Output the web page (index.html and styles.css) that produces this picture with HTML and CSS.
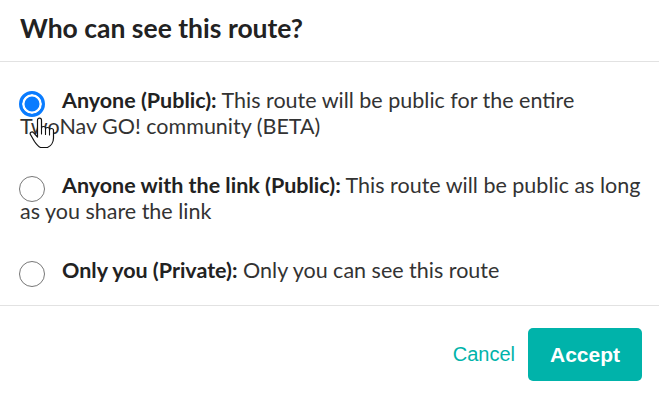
FILE: index.html
```html
<!DOCTYPE html>
<html>
<head>
<meta charset="utf-8">
<link rel="stylesheet" href="styles.css">
</head>
<body>
<div class="dialog">
  <header class="head">
    <h1 class="title">Who can see this route?</h1>
  </header>
  <div class="options">
    <label class="opt"><input class="radio" type="radio" name="vis" checked><b>Anyone (Public):</b> This route will be public for the entire TwoNav GO! community (BETA)</label>
    <label class="opt"><input class="radio" type="radio" name="vis"><b>Anyone with the link (Public):</b> This route will be public as long as you share the link</label>
    <label class="opt"><input class="radio" type="radio" name="vis"><b>Only you (Private):</b> Only you can see this route</label>
  </div>
  <footer class="foot">
    <button class="cancel" type="button">Cancel</button>
    <button class="accept" type="button">Accept</button>
  </footer>
  <svg class="cursor" width="26" height="32" viewBox="0 0 26 32">
    <path d="M8.5 17 V3.2 a2 2 0 0 1 4 0 V11.5 a2 2 0 0 1 4 0 v1 a2 2 0 0 1 4 0 v1 a2 2 0 0 1 4 0 V21 c0 4-2.5 8-6 9.5 h-7 c-2.5-1-4-3-6-6 L1.6 17.8 a1.8 1.8 0 0 1 2.9-2.2 L8.5 20 Z" fill="#fff" stroke="#111" stroke-width="1.2" stroke-linejoin="round"/>
    <path d="M12.5 12 v5 M16.5 13 v4.5 M20.5 14 v4" stroke="#111" stroke-width="1.1" fill="none" stroke-linecap="round"/>
  </svg>
</div>
</body>
</html>
```
FILE: styles.css
```css
* { box-sizing: border-box; }
html, body { margin: 0; padding: 0; background: #fff; }
body { font-family: Lato, "Noto Sans", sans-serif; color: #333; }
.dialog { position: relative; width: 659px; height: 400px; display: flex; flex-direction: column; }
.head { padding: 12px 20px 17px 20px; border-bottom: 1px solid #e2e2e2; }
.title { margin: 0; font-size: 26.5px; font-weight: 700; color: #222; line-height: 32px; }
.options { display: flex; flex-direction: column; gap: 33px; padding: 25px 12px 22px 20px; border-bottom: 1px solid #e2e2e2; }
.opt { display: block; font-size: 21.5px; line-height: 26px; color: #333; cursor: pointer; }
.opt b { font-weight: 700; color: #222; }
.radio { appearance: none; -webkit-appearance: none; width: 26px; height: 26px; margin: -4px 17px -4px -1px; border-radius: 50%; border: 1.5px solid #777; background: #fff; vertical-align: middle; position: relative; top: 1px; }
.radio:checked { border: 3px solid #0a7cff; background: #0a7cff; box-shadow: inset 0 0 0 2.5px #fff; }
.foot { display: flex; justify-content: flex-end; align-items: center; gap: 13px; padding: 22px 17px 0 0; }
.cancel { font-family: "Liberation Sans", Arial, sans-serif; font-size: 20px; color: #00b3aa; background: none; border: 0; padding: 0; cursor: pointer; }
.accept { font-family: "Liberation Sans", Arial, sans-serif; font-size: 21px; font-weight: 700; color: #fff; background: #00b3aa; border: 0; border-radius: 5px; height: 53px; width: 114px; padding: 0; cursor: pointer; }
.cursor { position: absolute; left: 29px; top: 117px; }
```
